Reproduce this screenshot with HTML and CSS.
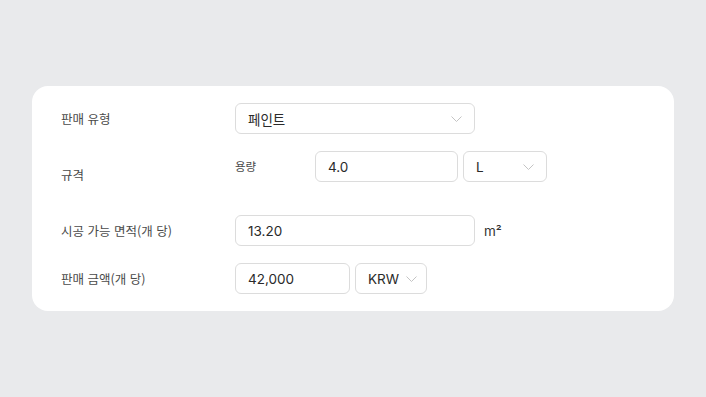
FILE: index.html
```html
<!DOCTYPE html>
<html lang="ko">
<head>
    <meta charset="UTF-8">
    <meta name="viewport" content="width=device-width, initial-scale=1.0">
    <title>판매 정보</title>
    <link rel="stylesheet" href="styles.css">
</head>
<body>
    <div class="card">
        <div class="row">
            <div class="label">판매 유형</div>
            <div class="controls">
                <div class="field select w-type">
                    <span>페인트</span>
                    <svg class="chev" width="11" height="6" viewBox="0 0 11 6"><path d="M0.5 0.5 L5.5 5.5 L10.5 0.5" fill="none" stroke="#c4c4c4" stroke-width="1"/></svg>
                </div>
            </div>
        </div>
        <div class="row row-tall">
            <div class="label">규격</div>
            <div class="controls top">
                <div class="sublabel">용량</div>
                <div class="field w-vol"><span>4.0</span></div>
                <div class="field select w-unit">
                    <span>L</span>
                    <svg class="chev" width="11" height="6" viewBox="0 0 11 6"><path d="M0.5 0.5 L5.5 5.5 L10.5 0.5" fill="none" stroke="#c4c4c4" stroke-width="1"/></svg>
                </div>
            </div>
        </div>
        <div class="row">
            <div class="label">시공 가능 면적(개 당)</div>
            <div class="controls">
                <div class="field w-type"><span>13.20</span></div>
                <span class="unit">m²</span>
            </div>
        </div>
        <div class="row">
            <div class="label">판매 금액(개 당)</div>
            <div class="controls">
                <div class="field w-price"><span>42,000</span></div>
                <div class="field select w-cur">
                    <span>KRW</span>
                    <svg class="chev" width="11" height="6" viewBox="0 0 11 6"><path d="M0.5 0.5 L5.5 5.5 L10.5 0.5" fill="none" stroke="#c4c4c4" stroke-width="1"/></svg>
                </div>
            </div>
        </div>
    </div>
</body>
</html>
```

FILE: styles.css
```css
body {
    margin: 0;
    width: 706px;
    height: 397px;
    background-color: #e9eaec;
    font-family: "Inter", "Noto Sans CJK KR", sans-serif;
    color: #222;
    overflow: hidden;
}
.card {
    margin: 86px 0 0 32px;
    width: 642px;
    height: 225px;
    box-sizing: border-box;
    background: #fff;
    border-radius: 16px;
    padding: 17px 29px;
    display: flex;
    flex-direction: column;
    gap: 17px;
}
.row {
    display: flex;
    align-items: center;
    height: 31px;
}
.row-tall {
    height: 46px;
    margin-bottom: 1px;
}
.label {
    width: 174px;
    font-family: "Noto Sans CJK KR", sans-serif;
    font-size: 12.5px;
    color: #4a4a4a;
}
.controls {
    display: flex;
    align-items: center;
    gap: 5px;
}
.controls.top {
    align-self: flex-start;
}
.sublabel {
    width: 75px;
    font-family: "Noto Sans CJK KR", sans-serif;
    font-size: 11.5px;
    color: #4a4a4a;
    margin-top: -1px;
}
.field {
    height: 31px;
    box-sizing: border-box;
    border: 1px solid #dcdcdc;
    border-radius: 6px;
    display: flex;
    align-items: center;
    justify-content: space-between;
    padding: 0 12px;
    font-size: 13.5px;
    color: #2a2a2a;
}
.field span {
    font-family: "Inter", "Noto Sans CJK KR", sans-serif;
}
.w-type { width: 240px; }
.w-vol { width: 143px; }
.w-unit { width: 84px; }
.w-price { width: 115px; }
.w-cur { width: 72px; justify-content: flex-start; gap: 7px; }
.chev {
    display: block;
    flex-shrink: 0;
}
.unit {
    margin-left: 4px;
    font-size: 13.5px;
    color: #333;
}
```
